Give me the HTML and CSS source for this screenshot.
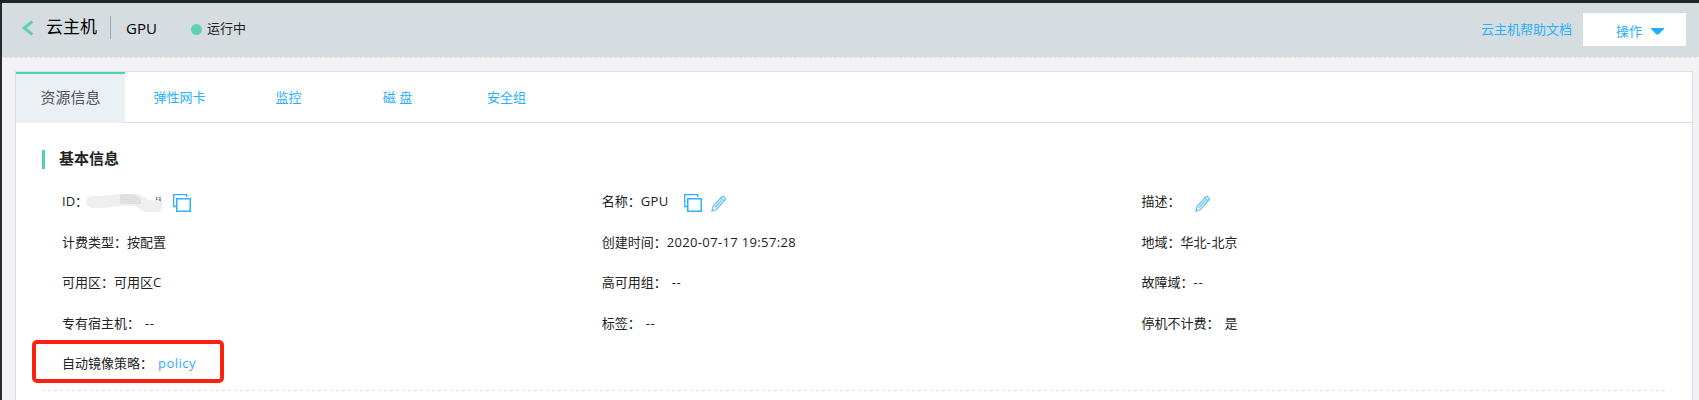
FILE: index.html
```html
<!DOCTYPE html>
<html lang="zh-CN">
<head>
<meta charset="utf-8">
<title>云主机 GPU</title>
<link rel="stylesheet" href="styles.css">
</head>
<body>
<svg width="0" height="0" class="defs">
  <symbol id="copy" viewBox="0 0 18 18"><path d="M3 12.500H.7V.7h13V3" fill="none" stroke="#30aeff" stroke-width="1.300"/><rect x="3.750" y="4.750" width="13.500" height="12.500" fill="#fff" stroke="#30aeff" stroke-width="1.500"/></symbol>
  <symbol id="pencil" viewBox="0 0 16 17"><path d="M1 16l1-4.500L11.200 1.500q.6-.5 1.200 0l1.800 1.800q.5.6 0 1.200L5.500 14.500zM10 3l2.800 2.800M4 12.500l6.500-7" fill="none" stroke="#62bffb" stroke-width="1.200"/></symbol>
</svg>
<header class="header">
  <svg class="back" width="12" height="16" viewBox="0 0 12 16"><path d="M10.500 1.500L2 8l8.500 6.500" fill="none" stroke="#5fd2b2" stroke-width="3"/></svg>
  <h1 class="title">云主机</h1>
  <span class="name">GPU</span>
  <span class="dot"></span>
  <span class="status">运行中</span>
  <a class="help">云主机帮助文档</a>
  <button class="action">操作<svg width="13" height="7" viewBox="0 0 13 7"><path d="M0 0h13v1L7.500 6.500h-2L0 1z" fill="#27acff"/></svg></button>
</header>
<main class="panel">
  <nav class="tabs">
    <a class="tab active">资源信息</a>
    <a class="tab">弹性网卡</a>
    <a class="tab">监控</a>
    <a class="tab">磁 盘</a>
    <a class="tab">安全组</a>
  </nav>
  <section class="section">
    <h2 class="heading">基本信息</h2>
    <div class="grid">
      <div class="cell">ID：<span class="masked">ij<svg class="smudge" width="80" height="22" viewBox="0 0 80 22"><path d="M7 9H20L34 7H52L62 13H72" fill="none" stroke="#efefef" stroke-width="12" stroke-linecap="round" stroke-linejoin="round"/><path d="M35 2Q48-1 56 6V11H35z" fill="#e0e0e0"/></svg></span><svg class="copy first"><use href="#copy"/></svg></div>
      <div class="cell">名称：<span class="latin">GPU</span><svg class="copy"><use href="#copy"/></svg><svg class="pencil"><use href="#pencil"/></svg></div>
      <div class="cell">描述：<svg class="pencil alone"><use href="#pencil"/></svg></div>
      <div class="cell">计费类型：按配置</div>
      <div class="cell">创建时间：<span class="latin">2020-07-17 19:57:28</span></div>
      <div class="cell">地域：华北<span class="dash">-</span>北京</div>
      <div class="cell">可用区：可用区C</div>
      <div class="cell">高可用组：<span class="value">--</span></div>
      <div class="cell">故障域：<span class="dash">--</span></div>
      <div class="cell">专有宿主机：<span class="value">--</span></div>
      <div class="cell">标签：<span class="value">--</span></div>
      <div class="cell">停机不计费：<span class="value">是</span></div>
      <div class="cell policy">自动镜像策略：<a class="value link">policy</a></div>
    </div>
    <svg class="rule" width="1624" height="1"><path d="M0 .5H1624" stroke="#dcdfe2" stroke-dasharray="3 3"/></svg>
  </section>
</main>
</body>
</html>
```
FILE: styles.css
```css
*, *::before { box-sizing: border-box; }
body {
  margin: 0;
  height: 400px;
  overflow: hidden;
  background: #f2f2f5;
  border-top: 3px solid #222325;
  border-left: 2px solid #28292c;
  font: 13px/20px "Open Sans", "Noto Sans CJK SC", sans-serif;
  color: #222;
}
svg { display: block; flex: none; }
.defs { position: absolute; }
.header {
  height: 55px;
  display: flex;
  align-items: center;
  padding: 0 13px 8px 20px;
  background: #d6dde0;
  border-bottom: 1px dashed #eef0f3;
}
.back { margin: 3px 12px 0 0; }
.title {
  margin: 3px 0 0;
  width: 65px;
  height: 23px;
  border-right: 1px solid #a1a8ab;
  font-size: 17px;
  font-weight: 400;
  line-height: 21px;
  color: #000;
}
.name { margin: 4px 0 0 15px; width: 65px; font-size: 15px; color: #000; }
.dot { width: 11px; height: 11px; border-radius: 50%; background: #5fd2b2; margin-top: 6px; }
.status { margin: 4px 0 0 5px; }
.help { margin-left: auto; margin-top: 6px; color: #2baeff; }
.action {
  width: 103px;
  height: 33px;
  margin: 6px 0 0 11px;
  padding: 4px 0 0 33px;
  border: 0;
  background: #fff;
  color: #2baeff;
  font: inherit;
  display: flex;
  align-items: center;
  gap: 9px;
}
.panel {
  margin: 13px 6px 0 13px;
  height: 340px;
  background: #fff;
  border: 1px solid #d9e0e7;
}
.tabs { display: flex; height: 51px; border-bottom: 1px solid #d0dae3; }
.tab { width: 109px; padding-top: 15px; text-align: center; color: #2baeff; }
.tab.active {
  height: 51px;
  padding-top: 13px;
  border-top: 2px solid #52d0b5;
  background: #ebf0f4;
  font-size: 15px;
  color: #505359;
}
.section { padding: 27px 26px 0; }
.heading {
  margin: 0;
  height: 19px;
  border-left: 3px solid #52d0b5;
  padding-left: 14px;
  font-size: 15px;
  line-height: 17px;
  color: #222;
}
.grid {
  display: grid;
  grid-template-columns: repeat(3, 539.7px);
  grid-auto-rows: 40.5px;
  padding: 12px 0 0 20px;
}
.cell { display: flex; align-items: center; white-space: nowrap; }
.latin { letter-spacing: .35px; }
.dash { letter-spacing: .9px; }
.value { margin-left: 5px; letter-spacing: .5px; }
.link { color: #2baeff; }
.copy { width: 18px; height: 18px; margin: 4px 0 0 15px; }
.copy.first { margin-left: 10px; }
.pencil { width: 16px; height: 17px; margin: 4px 0 0 9px; }
.pencil.alone { margin-left: 15px; }
.masked { position: relative; width: 78px; margin-left: -3px; padding-left: 70px; }
.smudge { position: absolute; left: 0; top: 2px; }
.policy { position: relative; }
.policy::before {
  content: "";
  position: absolute;
  left: -30px;
  top: -3px;
  width: 192px;
  height: 43px;
  border: 4px solid #ff2012;
  border-radius: 5px;
}
.rule { margin-top: 6px; }
```
